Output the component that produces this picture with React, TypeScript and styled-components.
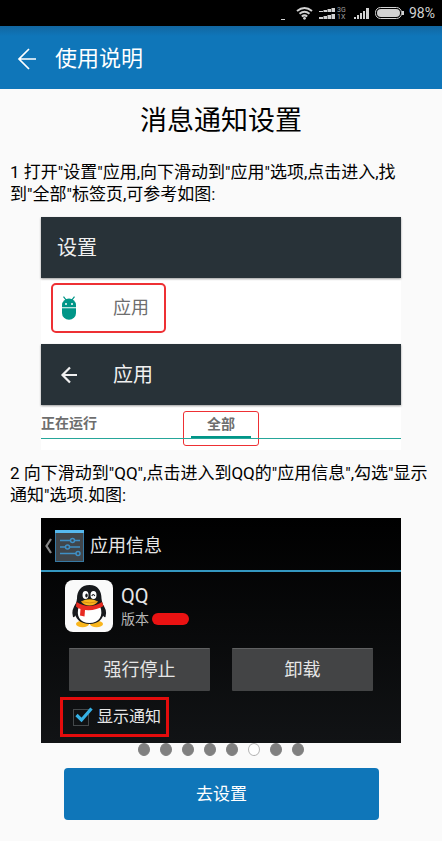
import React, { useState } from 'react';
import styled, { createGlobalStyle } from 'styled-components';

const GlobalStyle = createGlobalStyle`
  *, *::before, *::after { box-sizing: border-box; }
  body {
    margin: 0;
    background: #fafafa;
    color: #000;
    font-family: Roboto, 'Noto Sans CJK SC', sans-serif;
  }
  button {
    font-family: inherit;
    padding: 0;
    border: 0;
    background: none;
    color: inherit;
    cursor: pointer;
  }
  svg { display: block; flex: none; }
`;

const StatusBar = styled.div`
  display: flex;
  align-items: center;
  justify-content: flex-end;
  gap: 4px;
  height: 26px;
  padding-right: 7px;
  background: #000;
  color: #d2d2d2;
  font-size: 14px;
  line-height: 26px;
`;

const AppBar = styled.header`
  display: flex;
  align-items: center;
  gap: 18px;
  height: 63px;
  padding: 2px 17px 0;
  background: linear-gradient(#1267a0, #0f76b9 10px);
  color: #fff;
`;

const AppTitle = styled.h1`
  margin: 0;
  font-size: 22px;
  line-height: 32px;
  font-weight: 400;
`;

const Title = styled.h2`
  margin: 0;
  padding: 12px 0 8px;
  text-align: center;
  font-size: 27px;
  line-height: 40px;
  font-weight: 400;
`;

const Step = styled.p`
  margin: 0;
  padding: 12px 8px 12px 10px;
  font-size: 17px;
  line-height: 22px;
`;

const Figure = styled.figure<{ $dark?: boolean }>`
  margin: 0 41px;
  background: ${p => (p.$dark ? 'linear-gradient(#000, #111315)' : '#fff')};
  color: ${p => (p.$dark ? '#e6e6e6' : '#6e6e6e')};
`;

const SlateBar = styled.div`
  display: flex;
  align-items: center;
  gap: 34px;
  height: 61px;
  padding: 0 16px;
  background: #283238;
  box-shadow: 0 1px 2px #9a9a9a;
  color: #f0f0f0;
  font-size: 20px;
  line-height: 28px;
`;

const SettingRow = styled.div`
  height: 66px;
  padding: 5px 10px;
`;

const AppsItem = styled.div`
  display: flex;
  align-items: center;
  gap: 35px;
  width: 115px;
  height: 50px;
  padding: 0 7px;
  border: 2px solid #ee3034;
  border-radius: 5px;
  font-size: 18px;
  line-height: 26px;
`;

const Tabs = styled.div`
  position: relative;
  display: flex;
  align-items: flex-start;
  gap: 86px;
  height: 45px;
  padding-top: 6px;
  &::after {
    content: '';
    position: absolute;
    left: 0;
    right: 0;
    top: 33px;
    height: 1px;
    background: #26a69a;
  }
`;

const Tab = styled.button<{ $active?: boolean }>`
  height: 35px;
  width: ${p => (p.$active ? '76px' : 'auto')};
  padding: 0 ${p => (p.$active ? '7px' : '0')};
  border: ${p => (p.$active ? '1px solid #ee3034' : '0')};
  border-radius: 3px;
  font-size: 14px;
  font-weight: 700;
  line-height: 24px;
  display: flex;
  flex-direction: column;
  align-items: center;
`;

const TabLine = styled.span`
  width: 100%;
  height: 3px;
  background: #009688;
`;

const InfoBar = styled.div`
  display: flex;
  align-items: center;
  gap: 6px;
  height: 54px;
  padding: 3px 4px 0;
  border-bottom: 2px solid #3497c0;
  font-size: 18px;
  line-height: 26px;
`;

const AppInfo = styled.div`
  display: flex;
  align-items: center;
  gap: 8px;
  padding: 8px 24px 0;
`;

const AppName = styled.div`
  font-size: 20px;
  line-height: 26px;
`;

const Version = styled.div`
  display: flex;
  align-items: center;
  gap: 3px;
  color: #b5b5b5;
  font-size: 14px;
  line-height: 20px;
`;

const Redaction = styled.span`
  width: 37px;
  height: 12px;
  border-radius: 6px;
  background: #ea1212;
`;

const Actions = styled.div`
  display: grid;
  grid-template-columns: 1fr 1fr;
  gap: 22px;
  padding: 16px 28px 6px;
`;

const GreyButton = styled.button`
  height: 43px;
  border-top: 1px solid #606162;
  border-radius: 1px;
  background: #434445;
  font-size: 18px;
  line-height: 26px;
`;

const NotifyArea = styled.div`
  padding: 0 19px 6px;
`;

const NotifyLabel = styled.label`
  display: flex;
  align-items: center;
  gap: 8px;
  width: 109px;
  height: 40px;
  padding-left: 10px;
  border: 3px solid #e40c0c;
  font-size: 16px;
  line-height: 24px;
  white-space: nowrap;
`;

const CheckWrap = styled.span`
  position: relative;
  width: 16px;
  height: 17px;
  flex: none;
  svg {
    position: absolute;
    left: 2px;
    bottom: 3px;
    pointer-events: none;
  }
`;

const Check = styled.input`
  appearance: none;
  display: block;
  width: 100%;
  height: 100%;
  margin: 0;
  border: 1px solid #44484a;
  &:not(:checked) + svg { display: none; }
`;

const Pager = styled.nav`
  display: flex;
  justify-content: center;
  gap: 10px;
  height: 13px;
`;

const Dot = styled.button<{ $current: boolean }>`
  width: 12px;
  height: 13px;
  border: 1px solid ${p => (p.$current ? '#b4b4b4' : '#808080')};
  border-radius: 50%;
  background: ${p => (p.$current ? '#fff' : '#808080')};
`;

const Footer = styled.div`
  padding: 12px 63px 20px 64px;
`;

const GoButton = styled.button`
  display: block;
  width: 100%;
  height: 52px;
  border-radius: 4px;
  background: #0f76b9;
  color: #fff;
  font-size: 17px;
  line-height: 24px;
`;

const StatusIcons = () => (
  <svg width="124" height="18" viewBox="281 4 124 18" fill="#d2d2d2" aria-hidden="true">
    <path d="M281 19h4v1h-4z" />
    <path
      d="M297 11q7.500-6 15 0M299.500 13.800q5-4 10 0M301.800 16.500q2.700-2.200 5.400 0"
      fill="none"
      stroke="#d2d2d2"
      strokeWidth="2"
    />
    <circle cx="304.500" cy="18.300" r="1.400" />
    <path d="M319 11h4v1h-4zM323.500 10h3.500v2h-3.500zM327.500 9h3.500v3h-3.500zM331.500 8h3.500v4h-3.500zM319 17h4v2h-4zM323.500 16h3.500v3h-3.500zM327.500 15h3.500v4h-3.500zM331.500 14h3.500v5h-3.500z" />
    <text x="337" y="12" fontSize="7" fill="#a0a0a0">3G</text>
    <text x="337" y="19" fontSize="7" fill="#a0a0a0">1X</text>
    <path d="M354 17h2v2h-2zM357 15h2v4h-2zM360 13h2v6h-2zM363 11h2v8h-2zM366 8h3v11h-3z" />
    <rect x="375.500" y="7.500" width="26" height="11" rx="5" fill="none" stroke="#d2d2d2" />
    <rect x="377" y="9" width="23" height="8" rx="4" />
    <path d="M402 11h2v4h-2z" />
  </svg>
);

const BackIcon = () => (
  <svg width="20" height="24" viewBox="0 0 20 24" fill="none" stroke="#fff" strokeWidth="1.700">
    <path d="M19 12H2M12 2L2 12l10 10" />
  </svg>
);

const SmallBackIcon = () => (
  <svg width="22" height="18" viewBox="0 0 22 18" fill="none" stroke="#f0f0f0" strokeWidth="2.200">
    <path d="M20 9H6M13 1.500L5.500 9l7.500 7.500" />
  </svg>
);

const AndroidIcon = () => (
  <svg width="18" height="24" viewBox="0 0 18 24" fill="#009688" aria-hidden="true">
    <path d="M2 11.200V9a7 6.500 0 0 1 14 0v2.200z" />
    <path d="M3.500.7l2.700 3.400M14.500.7l-2.700 3.400" stroke="#009688" strokeWidth="1.200" />
    <path d="M2 12.200h14V17a7 6.700 0 0 1-14 0z" />
    <circle cx="6" cy="8" r="1" fill="#fff" />
    <circle cx="12" cy="8" r="1" fill="#fff" />
  </svg>
);

const SettingsIcon = () => (
  <svg width="39" height="32" viewBox="0 0 39 32" fill="none" aria-hidden="true">
    <path d="M6 9L1.500 16 6 23" stroke="#8a8a8a" strokeWidth="2.200" />
    <rect x="10.500" y="1.500" width="28" height="30" fill="#40464b" stroke="#3779a3" />
    <path d="M10 1.500h29" stroke="#56b9ee" strokeWidth="3" />
    <g stroke="#3f8fc4" strokeWidth="1.300">
      <path d="M15 10.500h20M15 17h20M15 23.500h20" />
      <g fill="#40464b" strokeWidth="1.500">
        <circle cx="27.500" cy="10.500" r="2" />
        <circle cx="22.500" cy="17" r="2" />
        <circle cx="33" cy="23.500" r="2" />
      </g>
    </g>
  </svg>
);

const PenguinIcon = () => (
  <svg width="48" height="52" viewBox="0 0 48 52" role="img" aria-label="QQ">
    <rect width="48" height="52" rx="8" fill="#fafafa" />
    <ellipse cx="17.500" cy="44" rx="6.500" ry="3.200" fill="#f9b51c" />
    <ellipse cx="31.500" cy="44" rx="6.500" ry="3.200" fill="#f9b51c" />
    <path d="M12 22Q5.500 30 8 37q2 1 5-6zM36 22q7 8 4.500 15-2 1-5-6z" fill="#17191c" />
    <path d="M24.500 5C16 5 12 11 12 18.500c0 3-2.500 7-2.500 12C9.500 39 16 44 24.500 44S39 39 39 30.500c0-5-2.500-9-2.500-12C36.500 11 33 5 24.500 5z" fill="#17191c" />
    <path d="M14 26q10 5 21 0c4 10-1 17-10.500 17S10.500 36 14 26z" fill="#fff" />
    <ellipse cx="20.500" cy="15" rx="3" ry="4" fill="#fff" />
    <ellipse cx="28.500" cy="15" rx="3" ry="4" fill="#fff" />
    <ellipse cx="21.500" cy="15.500" rx="1.200" ry="1.900" fill="#17191c" />
    <path d="M26.800 16q1.400-3 3 0" fill="none" stroke="#17191c" strokeWidth="1.200" />
    <path d="M16 21.500q8.500-4.500 17 0-3 4-8.500 4t-8.500-4z" fill="#f9b51c" />
    <path d="M16.500 21.700q8 2.500 16 0" fill="none" stroke="#c57810" strokeWidth=".7" />
    <path d="M11.500 22q13 8 25.500 0l1.500 4q-8 5-18.500 4l-.5 6.500-4.500-1 .5-6.500q-3-1-4.500-2.500z" fill="#e82b22" />
  </svg>
);

const CheckMark = () => (
  <svg width="18" height="16" viewBox="0 0 18 16" fill="none" stroke="#35b0e4" strokeWidth="3.200">
    <path d="M1.500 8l5 5L16.500 1.500" />
  </svg>
);

const PAGES = [1, 2, 3, 4, 5, 6, 7, 8];

export default function App() {
  const [page, setPage] = useState(6);
  return (
    <>
      <GlobalStyle />
      <StatusBar>
        <StatusIcons />
        <span>98%</span>
      </StatusBar>
      <AppBar>
        <button aria-label="返回"><BackIcon /></button>
        <AppTitle>使用说明</AppTitle>
      </AppBar>
      <main>
        <Title>消息通知设置</Title>
        <Step>1 打开"设置"应用,向下滑动到"应用"选项,点击进入,找到"全部"标签页,可参考如图:</Step>
        <Figure>
          <SlateBar>设置</SlateBar>
          <SettingRow>
            <AppsItem><AndroidIcon />应用</AppsItem>
          </SettingRow>
          <SlateBar>
            <button aria-label="返回"><SmallBackIcon /></button>
            应用
          </SlateBar>
          <Tabs>
            <Tab>正在运行</Tab>
            <Tab $active>全部<TabLine /></Tab>
          </Tabs>
        </Figure>
        <Step>2 向下滑动到"QQ",点击进入到QQ的"应用信息",勾选"显示通知"选项.如图:</Step>
        <Figure $dark>
          <InfoBar><SettingsIcon />应用信息</InfoBar>
          <AppInfo>
            <PenguinIcon />
            <div>
              <AppName>QQ</AppName>
              <Version>版本<Redaction /></Version>
            </div>
          </AppInfo>
          <Actions>
            <GreyButton>强行停止</GreyButton>
            <GreyButton>卸载</GreyButton>
          </Actions>
          <NotifyArea>
            <NotifyLabel>
              <CheckWrap>
                <Check type="checkbox" defaultChecked />
                <CheckMark />
              </CheckWrap>
              显示通知
            </NotifyLabel>
          </NotifyArea>
        </Figure>
        <Pager aria-label="页码">
          {PAGES.map(n => (
            <Dot key={n} $current={n === page} aria-label={`第${n}页`} onClick={() => setPage(n)} />
          ))}
        </Pager>
        <Footer>
          <GoButton>去设置</GoButton>
        </Footer>
      </main>
    </>
  );
}
